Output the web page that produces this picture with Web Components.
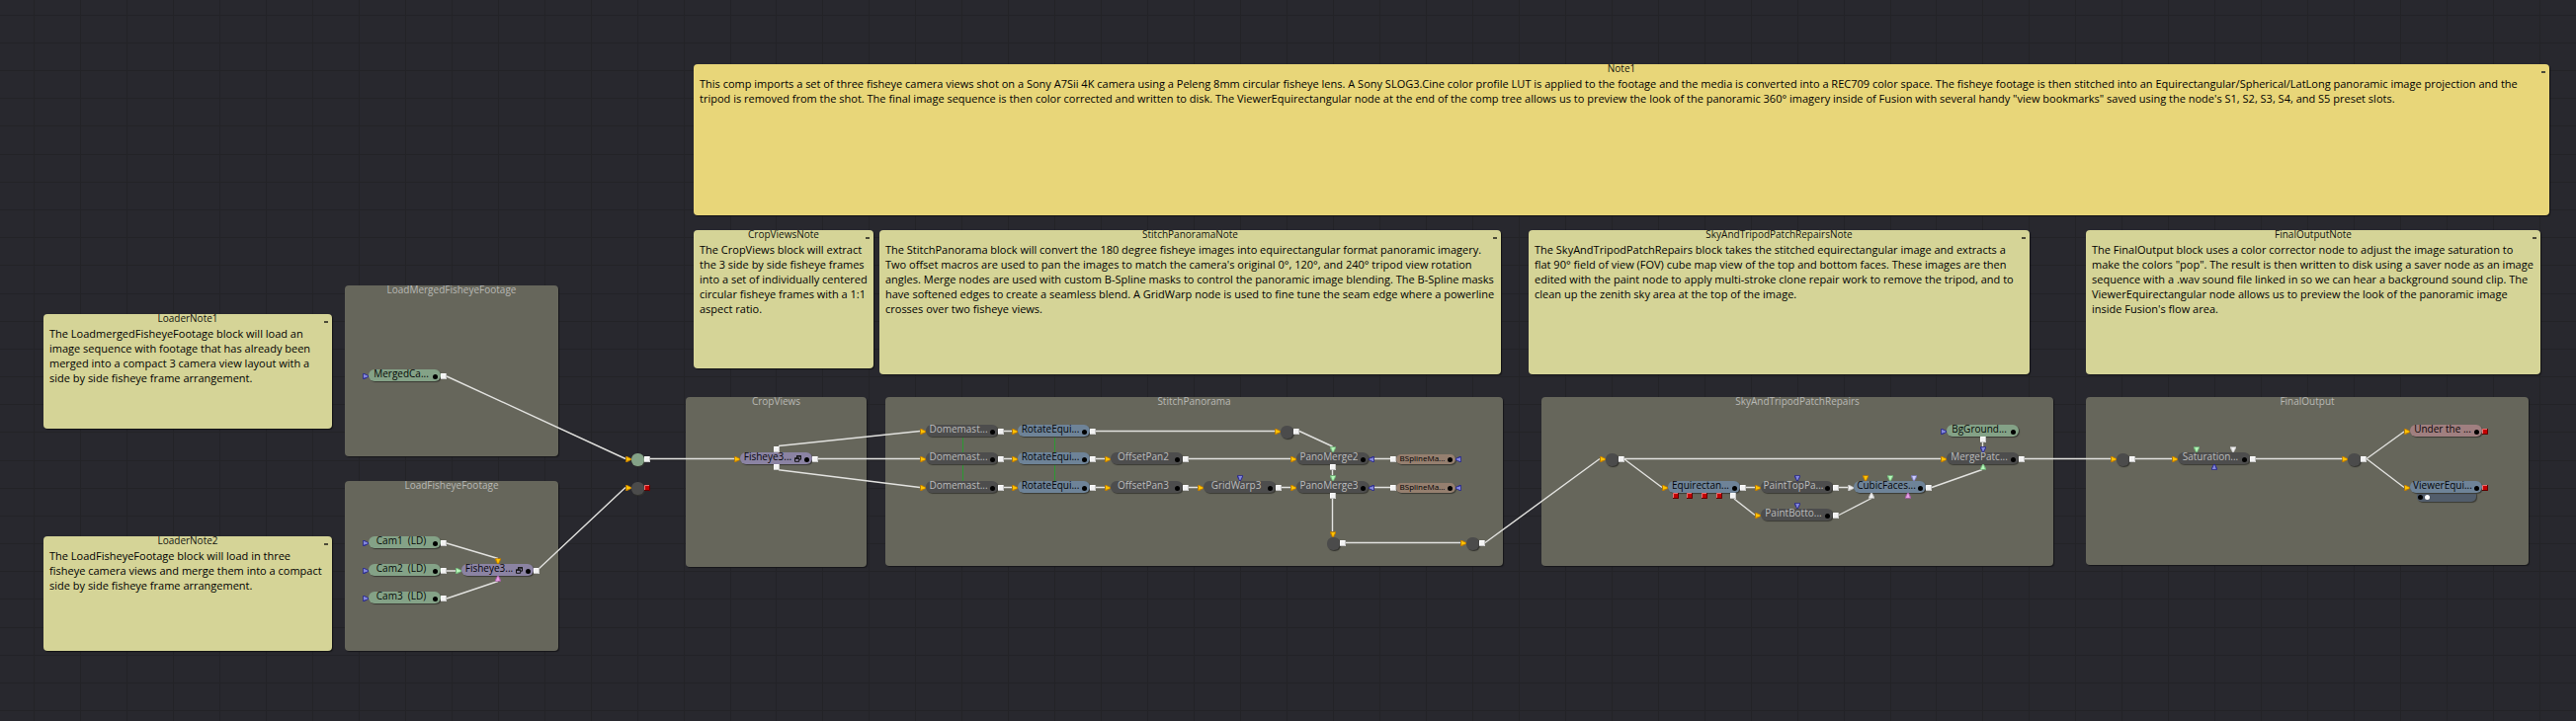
<!DOCTYPE html>
<html lang="en">
<head>
<meta charset="utf-8">
<title>Flow</title>
<style>
html,body{margin:0;padding:0;background:#28282e}
body{font-family:"Open Sans","Noto Sans",sans-serif}
</style>
</head>
<body>
<flow-canvas>
  <flow-group x="349" y="289" w="216" h="173" name="LoadMergedFisheyeFootage"></flow-group>
  <flow-group x="349" y="487" w="216" h="172" name="LoadFisheyeFootage"></flow-group>
  <flow-group x="694" y="402" w="183" h="172" name="CropViews"></flow-group>
  <flow-group x="896" y="402" w="625" h="171" name="StitchPanorama"></flow-group>
  <flow-group x="1560" y="402" w="518" h="171" name="SkyAndTripodPatchRepairs"></flow-group>
  <flow-group x="2111" y="402" w="448" h="170" name="FinalOutput"></flow-group>

  <flow-note x="702" y="65" w="1878" h="153" name="Note1" color="#e8d679">This comp imports a set of three fisheye camera views shot on a Sony A7Sii 4K camera using a Peleng 8mm circular fisheye lens. A Sony SLOG3.Cine color profile LUT is applied to the footage and the media is converted into a REC709 color space. The fisheye footage is then stitched into an Equirectangular/Spherical/LatLong panoramic image projection and the<br>tripod is removed from the shot. The final image sequence is then color corrected and written to disk. The ViewerEquirectangular node at the end of the comp tree allows us to preview the look of the panoramic 360° imagery inside of Fusion with several handy "view bookmarks" saved using the node's S1, S2, S3, S4, and S5 preset slots.</flow-note>
  <flow-note x="702" y="233" w="182" h="140" name="CropViewsNote">The CropViews block will extract<br>the 3 side by side fisheye frames<br>into a set of individually centered<br>circular fisheye frames with a 1:1<br>aspect ratio.</flow-note>
  <flow-note x="890" y="233" w="629" h="146" name="StitchPanoramaNote">The StitchPanorama block will convert the 180 degree fisheye images into equirectangular format panoramic imagery.<br>Two offset macros are used to pan the images to match the camera's original 0°, 120°, and 240° tripod view rotation<br>angles. Merge nodes are used with custom B-Spline masks to control the panoramic image blending. The B-Spline masks<br>have softened edges to create a seamless blend. A GridWarp node is used to fine tune the seam edge where a powerline<br>crosses over two fisheye views.</flow-note>
  <flow-note x="1547" y="233" w="507" h="146" name="SkyAndTripodPatchRepairsNote">The SkyAndTripodPatchRepairs block takes the stitched equirectangular image and extracts a<br>flat 90° field of view (FOV) cube map view of the top and bottom faces. These images are then<br>edited with the paint node to apply multi-stroke clone repair work to remove the tripod, and to<br>clean up the zenith sky area at the top of the image.</flow-note>
  <flow-note x="2111" y="233" w="460" h="146" name="FinalOutputNote">The FinalOutput block uses a color corrector node to adjust the image saturation to<br>make the colors "pop". The result is then written to disk using a saver node as an image<br>sequence with a .wav sound file linked in so we can hear a background sound clip. The<br>ViewerEquirectangular node allows us to preview the look of the panoramic image<br>inside Fusion's flow area.</flow-note>
  <flow-note x="44" y="318" w="292" h="116" name="LoaderNote1">The LoadmergedFisheyeFootage block will load an<br>image sequence with footage that has already been<br>merged into a compact 3 camera view layout with a<br>side by side fisheye frame arrangement.</flow-note>
  <flow-note x="44" y="543" w="292" h="116" name="LoaderNote2">The LoadFisheyeFootage block will load in three<br>fisheye camera views and merge them into a compact<br>side by side fisheye frame arrangement.</flow-note>

  <flow-wires></flow-wires>

  <flow-node x="373" y="374" kind="green" ports="in:blue out:white">MergedCa...</flow-node>
  <flow-node x="373" y="543" kind="green" ports="in:blue out:white">Cam1&nbsp; (LD)</flow-node>
  <flow-node x="373" y="571" kind="green" ports="in:blue out:white">Cam2&nbsp; (LD)</flow-node>
  <flow-node x="373" y="599" kind="green" ports="in:blue out:white">Cam3&nbsp; (LD)</flow-node>
  <flow-node x="467" y="571" kind="purple" macro ports="in:mint out:white top37:orange bot37:pink">Fisheye3...</flow-node>
  <flow-dot x="646" y="465" on></flow-dot>
  <flow-dot x="646" y="494" out="red"></flow-dot>

  <flow-node x="749" y="458" kind="purple" macro ports="in:orange out:white topq37:white botq37:white">Fisheye3...</flow-node>

  <flow-node x="937" y="430" ports="in:orange out:white">Domemast...</flow-node>
  <flow-node x="937" y="458" ports="in:orange out:white">Domemast...</flow-node>
  <flow-node x="937" y="487" ports="in:orange out:white">Domemast...</flow-node>
  <flow-node x="1030" y="430" kind="blue" ports="in:orange out:white">RotateEqui...</flow-node>
  <flow-node x="1030" y="458" kind="blue" ports="in:orange out:white">RotateEqui...</flow-node>
  <flow-node x="1030" y="487" kind="blue" ports="in:orange out:white">RotateEqui...</flow-node>
  <flow-node x="1124" y="458" ports="in:orange out:white">OffsetPan2</flow-node>
  <flow-node x="1124" y="487" ports="in:orange out:white">OffsetPan3</flow-node>
  <flow-node x="1218" y="487" ports="in:orange out:white top37:blue">GridWarp3</flow-node>
  <flow-dot x="1303" y="437"></flow-dot>
  <flow-node x="1312" y="458" ports="in:orange back:blue top37:mint botq37:white">PanoMerge2</flow-node>
  <flow-node x="1312" y="487" ports="in:orange back:blue top37:mint botq37:white">PanoMerge3</flow-node>
  <flow-node x="1413" y="460" w="60" h="10" kind="brown" ports="lout:white back:blue">BSplineMa...</flow-node>
  <flow-node x="1413" y="489" w="60" h="10" kind="brown" ports="lout:white back:blue">BSplineMa...</flow-node>
  <flow-dot x="1350" y="550" from="top"></flow-dot>
  <flow-dot x="1491" y="550"></flow-dot>

  <flow-dot x="1632" y="465"></flow-dot>
  <flow-node x="1688" y="487" kind="blue" ports="in:orange out:white botq8:red botq22:red botq37:red botq52:red botq66:white">Equirectan...</flow-node>
  <flow-node x="1782" y="487" ports="in:orange out:white top37:blue">PaintTopPa...</flow-node>
  <flow-node x="1782" y="515" ports="in:orange out:white top37:blue">PaintBotto...</flow-node>
  <flow-node x="1876" y="487" kind="blue" ports="in:white out:white top12:orange top37:mint top61:lilac bot18:white bot55:pink">CubicFaces...</flow-node>
  <flow-node x="1970" y="430" kind="green" ports="in:blue botq37:white">BgGround...</flow-node>
  <flow-node x="1970" y="458" ports="in:orange out:white top37:blue bot37:mint">MergePatc...</flow-node>

  <flow-dot x="2149" y="465"></flow-dot>
  <flow-node x="2204" y="458" ports="in:orange out:white top19:mint top56:white bot37:blue">Saturation...</flow-node>
  <flow-dot x="2383" y="465"></flow-dot>
  <flow-node x="2439" y="430" kind="rose" ports="in:orange out:red">Under the ...</flow-node>
  <flow-node x="2439" y="487" kind="blue" views ports="in:orange out:red">ViewerEqui...</flow-node>
</flow-canvas>

<script>
const PORTS = {
  orange: ['#ffc400', '#c07c00'],
  blue:   ['#8488dc', '#2c2c90'],
  mint:   ['#b4f8b8', '#74b87c'],
  pink:   ['#e8a0e6', '#a860a8'],
  lilac:  ['#ccccff', '#8080c0'],
  white:  ['#f2f2f2', '#c6c6c6'],
  red:    ['#c40000', '#5e0000']
};

// One connector glyph: a 6px arrow (right, left, down, up) or a 6px square.
class FlowPort extends HTMLElement {
  connectedCallback() {
    const [fill, edge] = PORTS[this.getAttribute('color')];
    const dir = this.getAttribute('dir');
    const turn = {right: 0, down: 90, left: 180, up: 270}[dir];
    const light = this.getAttribute('color') === 'red' ? '#e87070' : '#fff';
    const art = dir === 'square'
      ? `<rect width="6" height="6" fill="${fill}"/><path d="M0 5.5H5.5V0" fill="none" stroke="${edge}"/><path d="M.5 5V.5H5" fill="none" stroke="${light}"/>`
      : `<g transform="rotate(${turn} 3 3)"><path d="M.2 0H1.8L6 2.2V3.8L1.8 6H.2Z" fill="${edge}"/><path d="M1 .8L5 2.6V3.4L1 4.8Z" fill="${fill}"/></g>`;
    this.attachShadow({mode: 'open'}).innerHTML = `
      <style>
        :host{position:absolute;display:block;width:6px;height:6px;
          left:${this.getAttribute('cx') - 3}px;top:${this.getAttribute('cy') - 3}px}
        svg{display:block;overflow:visible}
      </style><svg width="6" height="6">${art}</svg>`;
  }
}

class FlowGroup extends HTMLElement {
  connectedCallback() {
    const a = n => this.getAttribute(n);
    this.attachShadow({mode: 'open'}).innerHTML = `
      <style>
        :host{position:absolute;left:${a('x')}px;top:${a('y')}px;width:${a('w')}px;height:${a('h')}px;
          display:flex;justify-content:center;background:#66665b;border-radius:4px;box-shadow:1px 1px 1px #16161a}
        span{font-size:10px;line-height:14px;margin-top:-3px;color:#b8b8b4;white-space:nowrap}
      </style><span>${a('name')}</span>`;
  }
}

class FlowNote extends HTMLElement {
  connectedCallback() {
    const a = n => this.getAttribute(n);
    this.attachShadow({mode: 'open'}).innerHTML = `
      <style>
        :host{position:absolute;left:${a('x')}px;top:${a('y')}px;width:${a('w')}px;height:${a('h')}px;
          display:flex;flex-direction:column;background:${a('color') || '#d5d497'};border-radius:4px;
          box-shadow:1px 1px 1px #121214;color:#000}
        header{font-size:10px;line-height:14px;margin-top:-3px;text-align:center;color:#14140f}
        div{font-size:11px;line-height:15px;margin:1px 0 0 6px;white-space:nowrap}
        i{position:absolute;right:4px;top:7px;width:4px;height:2px;background:#4c4b38}
      </style><header>${a('name')}</header><div><slot></slot></div><i></i>`;
  }
}

const KINDS = {
  gray:   ['#4d4d4d', '#bcbcbc'],
  green:  ['#84a287', '#050805'],
  purple: ['#8b83a3', '#060508'],
  blue:   ['#6e8398', '#040608'],
  brown:  ['#957f6f', '#000'],
  rose:   ['#a07f80', '#0a0505']
};

class FlowNode extends HTMLElement {
  connectedCallback() {
    const a = n => this.getAttribute(n);
    const w = +(a('w') || 73), h = +(a('h') || 12);
    const small = h < 12;
    const [bg, fg] = KINDS[a('kind') || 'gray'];
    const mid = small ? 5 : 7;
    const ports = a('ports').split(' ').map(p => {
      const [where, color] = p.split(':');
      const at = +(where.match(/\d+/) || [0])[0];
      const make = (dir, cx, cy) => `<flow-port dir="${dir}" color="${color}" cx="${cx}" cy="${cy}"></flow-port>`;
      if (where === 'in') return make('right', -3, 7);
      if (where === 'out') return make('square', w + 3, 7);
      if (where === 'lout') return make('square', -3, 5);
      if (where === 'back') return make('left', w + 3, mid);
      if (where.startsWith('topq')) return make('square', at, -3);
      if (where.startsWith('botq')) return make('square', at, 15);
      if (where.startsWith('top')) return make('down', at, -3);
      return make('up', at, 15);
    }).join('');
    this.attachShadow({mode: 'open'}).innerHTML = `
      <style>
        :host{position:absolute;left:${a('x')}px;top:${a('y')}px;width:${w}px;height:${h}px;display:block}
        .pill{position:relative;display:flex;align-items:center;width:100%;height:100%;border-radius:${h / 2}px;
          background:${bg};box-shadow:1px 1px 1px #3a3a34;box-sizing:border-box;padding-left:1px}
        span{flex:1;text-align:center;color:${fg};white-space:nowrap;
          font-size:${small ? 8 : 10}px;line-height:14px;margin-top:${small ? -3 : -4}px}
        b{flex:none;width:5px;height:5px;border-radius:50%;background:#000;margin:${small ? 1 : 3}px 3px 0 0}
        svg{flex:none;margin:1px 3px 0 0}
        .views{position:absolute;left:7px;top:9px;width:60px;height:12px;border-radius:5px;background:#525d6b;
          box-shadow:1px 1px 1px #3a3a34;display:flex;gap:2px;align-items:flex-end;box-sizing:border-box;padding:0 1px 2px}
        .views u{width:5px;height:5px;border-radius:50%;background:#000}
        .views u+u{background:#fff}
      </style>
      ${this.hasAttribute('views') ? '<div class="views"><u></u><u></u></div>' : ''}
      <div class="pill"><span><slot></slot></span>
      ${this.hasAttribute('macro') ? '<svg width="7" height="7"><path d="M2.5 3V.8H6.5V4.2H5M.5 3H4.7V6.3H.5Z" fill="none" stroke="#111"/><path d="M2 .8H7M0 3.2H5" stroke="#111" stroke-width="1.3"/></svg>' : ''}
      <b></b></div>${ports}`;
  }
}

// Pipe router: a round pass-through point with one input and one output.
class FlowDot extends HTMLElement {
  connectedCallback() {
    const a = n => this.getAttribute(n);
    const top = a('from') === 'top';
    this.attachShadow({mode: 'open'}).innerHTML = `
      <style>
        :host{position:absolute;left:${a('x') - 7}px;top:${a('y') - 6}px;width:13px;height:13px;display:block}
        div{width:100%;height:100%;border-radius:6px;background:${this.hasAttribute('on') ? '#84a287' : '#4b4b4b'};
          box-shadow:1px 1px 1px #33332f}
      </style><div></div>
      <flow-port dir="${top ? 'down' : 'right'}" color="orange" cx="${top ? 6 : -3}" cy="${top ? -3 : 6}"></flow-port>
      <flow-port dir="square" color="${a('out') || 'white'}" cx="16" cy="6"></flow-port>`;
  }
}

const WIRES = [
  [452,381,633,464.5],[452,550,504,565.5],[452,578,461,578],[452,606,504,588.5],[543,578,633,493.5],
  [658,464.5,744,464.5],[788,451.5,931,436.5],[828,464.5,931,464.5],[788,475.7,931,493.5],
  [1016,436.5,1024,436.5],[1016,464.5,1024,464.5],[1016,493.5,1024,493.5],
  [1109,436.5,1291,436.5],[1109,464.5,1118,464.5],[1109,493.5,1118,493.5],
  [1203,464.5,1306,464.5],[1203,493.5,1212,493.5],[1297,493.5,1306,493.5],
  [1315,436.5,1348.5,452],[1391,464.5,1407,464.5],[1391,493.5,1407,493.5],
  [1348.5,476,1348.5,481],[1348.5,505,1348.5,538],[1362,549.5,1478,549.5],[1503,549.5,1619,464.5],
  [1644,464.5,1964,464.5],[1644,465,1682,493.5],[1767,493.5,1776,493.5],[1755,505,1776,521.5],
  [1861,493.5,1870,493.5],[1861,521.5,1894,504.5],[1955,493.5,2006,475.5],[2006.5,448,2006.5,452],
  [2049,464.5,2136,464.5],[2161,464.5,2198,464.5],[2283,464.5,2371,464.5],
  [2395,464.5,2433,437],[2395,464.5,2433,493.5]
];
const LINKS = [[974.5,442,974.5,487],[1067.5,442,1067.5,487]];

class FlowWires extends HTMLElement {
  connectedCallback() {
    const path = l => l.map(([a, b, c, d]) => `M${a} ${b}L${c} ${d}`).join('');
    this.attachShadow({mode: 'open'}).innerHTML = `
      <style>:host{position:absolute;inset:0;display:block}svg{display:block}</style>
      <svg width="2607" height="730" fill="none">
        <path d="${path(WIRES)}" stroke="#e2e2df" stroke-width="1.4"/>
        <path d="${path(LINKS)}" stroke="#2a9a32" stroke-width="1"/>
      </svg>`;
  }
}

class FlowCanvas extends HTMLElement {
  connectedCallback() {
    let d = '';
    for (let i = -1; i < 56; i++) d += `M${Math.floor(34.6 + 46.96 * i) + .5} 0V730`;
    for (let i = 0; i < 27; i++) d += `M0 ${Math.floor(15.2 + 28.18 * i) + .5}H2607`;
    this.attachShadow({mode: 'open'}).innerHTML = `
      <style>
        :host{position:relative;display:block;width:2607px;height:730px;overflow:hidden;background:#28282e}
        svg{position:absolute;inset:0}
      </style>
      <svg width="2607" height="730"><path d="${d}" stroke="#232327" fill="none"/></svg><slot></slot>`;
  }
}

customElements.define('flow-port', FlowPort);
customElements.define('flow-group', FlowGroup);
customElements.define('flow-note', FlowNote);
customElements.define('flow-node', FlowNode);
customElements.define('flow-dot', FlowDot);
customElements.define('flow-wires', FlowWires);
customElements.define('flow-canvas', FlowCanvas);
</script>
</body>
</html>
